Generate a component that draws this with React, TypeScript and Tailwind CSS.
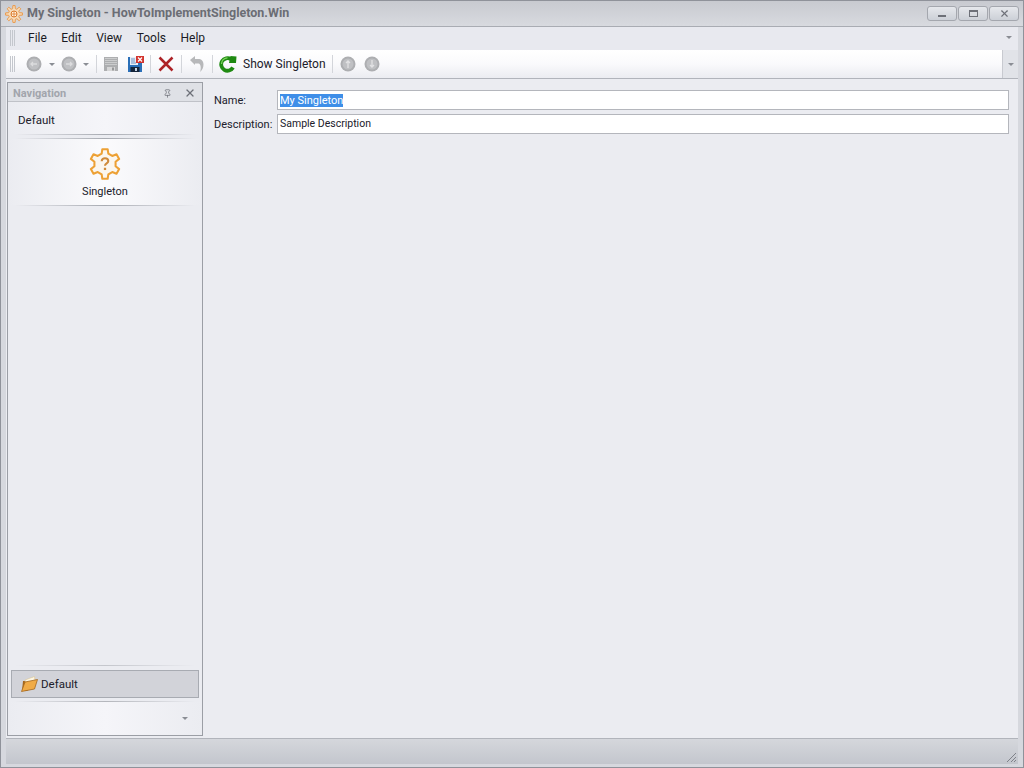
import type { ReactNode } from "react";
import { Pin, X } from "lucide-react";

function gearPath(cx: number, cy: number, outer: number, inner: number, teeth: number) {
  const step = (Math.PI * 2) / teeth;
  const pts: string[] = [];
  for (let i = 0; i < teeth; i++) {
    const a = -Math.PI / 2 + i * step;
    const at = (r: number, off: number) =>
      `${(cx + r * Math.cos(a + off * step)).toFixed(2)} ${(cy + r * Math.sin(a + off * step)).toFixed(2)}`;
    pts.push(at(inner, -0.3), at(outer, -0.17), at(outer, 0.17), at(inner, 0.3));
  }
  return `M${pts.join("L")}Z`;
}

function Grip() {
  return (
    <div className="flex gap-px h-[16px]">
      <div className="w-px bg-[#c4c7cd]" />
      <div className="w-px bg-[#c4c7cd]" />
      <div className="w-px bg-[#c4c7cd]" />
    </div>
  );
}

function Sep() {
  return <div className="w-px h-[18px] bg-[#d3d5da]" />;
}

function Caret({ className = "" }: { className?: string }) {
  return <div className={`w-0 h-0 border-x-[3px] border-x-transparent border-t-[3px] border-t-[#8a8d94] ${className}`} />;
}

function RoundIcon({ kind }: { kind: "back" | "forward" | "up" | "down" }) {
  return (
    <svg width="16" height="16" viewBox="0 0 16 16">
      <circle cx="8" cy="8" r="7.5" fill="#adaeb1" />
      <circle cx="8" cy="8" r="5.500" fill="#bfc0c3" />
      {kind === "back" && <path d="M11 8H5M7 6 5 8l2 2" stroke="#dcdcde" strokeWidth="1.300" fill="none" />}
      {kind === "forward" && <path d="M5 8h6M9 6l2 2-2 2" stroke="#dcdcde" strokeWidth="1.300" fill="none" />}
      {kind === "up" && <path d="M8 12V5M6 7l2-2 2 2" stroke="#e2e2e4" strokeWidth="1.300" fill="none" />}
      {kind === "down" && <path d="M8 4v7M6 9l2 2 2-2" stroke="#e2e2e4" strokeWidth="1.300" fill="none" />}
    </svg>
  );
}

function SaveIcon() {
  return (
    <svg width="16" height="16" viewBox="0 0 16 16">
      <rect x="1" y="1" width="14" height="14" fill="#adaeb0" />
      <path d="M2 2.500h12M2 4.500h12M2 6.500h12M2 8.500h12" stroke="#cbcccd" />
      <rect x="4" y="11" width="8" height="4" fill="#d6d6d7" />
      <rect x="9" y="11.500" width="2" height="3" fill="#97989a" />
    </svg>
  );
}

function SaveCloseIcon() {
  return (
    <svg width="16" height="16" viewBox="0 0 16 16">
      <rect x="0" y="1" width="14" height="15" fill="#2a6fb8" />
      <rect x="2" y="1" width="8" height="8" fill="#e9eef6" />
      <path d="M3 3h4M3 5h4M3 7h5" stroke="#6d93c4" />
      <rect x="2.500" y="11" width="9" height="5" fill="#14243a" />
      <rect x="7" y="12" width="2" height="3" fill="#c9d4e2" />
      <rect x="8" y="0" width="8" height="7" fill="#d2342e" />
      <path d="m10 1.500 4 4M14 1.500l-4 4" stroke="#fff" strokeWidth="1.200" />
    </svg>
  );
}

function DeleteIcon() {
  return (
    <svg width="16" height="16" viewBox="0 0 16 16">
      <path d="M1.500 1.500 14.500 14.500M14.500 1.500 1.500 14.500" stroke="#ad2327" strokeWidth="2.500" />
    </svg>
  );
}

function UndoIcon() {
  return (
    <svg width="14" height="16" viewBox="0 0 14 16">
      <path d="M0 4 5 0v3h3c3.500 0 5.500 2 5.500 5.500 0 3-1.200 5.500-3.500 7.500 .8-2 1-4.500 .4-6.500C9.800 7.800 9 7.500 7.500 7.500H5V9Z" fill="#b7b8ba" />
    </svg>
  );
}

function RefreshIcon() {
  return (
    <svg width="18" height="18" viewBox="0 0 18 18">
      <path d="M14 12.500A6.300 6.300 0 1 1 12 4.200" fill="none" stroke="#1f8a12" strokeWidth="3.800" />
      <path d="M11.500 1 17.500 1.500 17 8 10 8Z" fill="#1f8a12" />
      <path d="M2.500 9A6 6 0 0 1 8.500 2.800" fill="none" stroke="#7fd65f" strokeWidth="1.300" />
    </svg>
  );
}

function GearQuestion() {
  return (
    <svg width="32" height="32" viewBox="0 0 34 34">
      <path d={gearPath(17, 17, 16, 11.500, 6)} fill="#fbf6ee" stroke="#eda135" strokeWidth="2.200" strokeLinejoin="round" />
      <path d="M13.500 14c0-2 1.500-3.200 3.500-3.200s3.500 1.200 3.500 3c0 2.500-3.500 2.500-3.500 5" fill="none" stroke="#cf8a3a" strokeWidth="2.200" />
      <rect x="15.800" y="21" width="2.400" height="2.400" fill="#cf8a3a" />
    </svg>
  );
}

function AppIcon() {
  return (
    <svg width="18" height="18" viewBox="0 0 18 18">
      <path d={gearPath(9, 9, 8.500, 5.500, 8)} fill="#f7dcba" stroke="#ea9a4c" strokeWidth="1" />
      <circle cx="9" cy="9" r="3" fill="#fff6e8" stroke="#dd7b2a" />
      <path d="M9 6v6M6 9h6" stroke="#dd7b2a" strokeWidth=".8" />
    </svg>
  );
}

function FolderIcon() {
  return (
    <svg width="18" height="18" viewBox="0 0 18 18">
      <path d="M3 6h3l8-4 1 7-8 7H2Z" fill="#a5671d" />
      <path d="M5 5 14.500 1.500 15.500 9 6 11Z" fill="#fdf6e3" stroke="#d9c08a" strokeWidth=".5" />
      <path d="M5 7 17.500 4.500 14.500 14 1.500 16.500Z" fill="#f0ab47" stroke="#a5671d" strokeWidth=".8" />
    </svg>
  );
}

function WindowButton({ children }: { children: ReactNode }) {
  return (
    <div className="w-[30px] h-[15px] flex items-center justify-center rounded-[3px] border border-[#a4a7ae] bg-gradient-to-b from-[#e6e8ec] to-[#ccd0d7]">
      {children}
    </div>
  );
}

function MenuItem({ label }: { label: string }) {
  return <span className="text-[12px] text-[#1a1a24] leading-none">{label}</span>;
}

function FieldRow({ label, value, selected }: { label: string; value: string; selected?: boolean }) {
  return (
    <div className="flex items-center h-[20px]">
      <span className="w-[63px] shrink-0 text-[11px] text-[#20202a] leading-none">{label}</span>
      <div className="flex-1 h-[20px] flex items-center bg-white border border-[#b4b6bc] pl-[2px] text-[10.5px] leading-none text-[#20202a]">
        {selected ? (
          <span className="text-[11px] bg-[#3e8ee8] text-white leading-[13px]">{value}</span>
        ) : (
          <span className="mt-[1px]">{value}</span>
        )}
      </div>
    </div>
  );
}

function Fade({ className }: { className: string }) {
  return <div className={`mx-[7px] h-px shrink-0 bg-gradient-to-r from-transparent to-transparent ${className}`} />;
}

export default function App() {
  return (
    <div className="font-['Roboto',sans-serif] w-[1024px] h-[768px] overflow-hidden flex flex-col bg-[#d6d8de] border border-[#8f929a]">
      <div className="h-[26px] shrink-0 flex items-center pl-[4px] pr-[4px] bg-gradient-to-b from-[#c8cad0] to-[#d8dadf] border-b border-[#a9acb3]">
        <AppIcon />
        <span className="ml-[4px] text-[12.5px] font-bold text-[#6b6d74] leading-none">My Singleton - HowToImplementSingleton.Win</span>
        <div className="ml-auto flex gap-[1px] -mt-[1px]">
          <WindowButton><div className="w-[8px] h-[2px] bg-[#6d7078] mt-[5px]" /></WindowButton>
          <WindowButton><div className="w-[9px] h-[7px] border border-t-2 border-[#6d7078]" /></WindowButton>
          <WindowButton><X size={11} strokeWidth={2.500} className="text-[#6d7078]" /></WindowButton>
        </div>
      </div>

      <div className="flex-1 min-h-0 flex flex-col pl-[5px] pr-[5px]">
        <div className="h-[23px] shrink-0 flex items-center bg-[#e8e9ef] pl-[4px] pr-[6px] pb-[2px]">
          <Grip />
          <div className="ml-[13px] flex gap-[14.5px]">
            <MenuItem label="File" />
            <MenuItem label="Edit" />
            <MenuItem label="View" />
            <MenuItem label="Tools" />
            <MenuItem label="Help" />
          </div>
          <Caret className="ml-auto" />
        </div>

        <div className="h-[29px] shrink-0 flex items-center bg-gradient-to-b from-white via-[#fafafc] to-[#ebecf1] border-b border-[#b1b4bb] pl-[4px]">
          <Grip />
          <div className="ml-[11px] flex items-center">
            <RoundIcon kind="back" />
            <Caret className="ml-[7px]" />
            <div className="ml-[6px]"><RoundIcon kind="forward" /></div>
            <Caret className="ml-[6px]" />
            <div className="ml-[7px]"><Sep /></div>
            <div className="ml-[6px]"><SaveIcon /></div>
            <div className="ml-[9px]"><SaveCloseIcon /></div>
            <div className="ml-[6px]"><Sep /></div>
            <div className="ml-[7px]"><DeleteIcon /></div>
            <div className="ml-[7px]"><Sep /></div>
            <div className="ml-[8px]"><UndoIcon /></div>
            <div className="ml-[8px]"><Sep /></div>
            <div className="ml-[6px]"><RefreshIcon /></div>
            <span className="ml-[6px] text-[12px] text-[#20202a] leading-none">Show Singleton</span>
            <div className="ml-[6px]"><Sep /></div>
            <div className="ml-[7px]"><RoundIcon kind="up" /></div>
            <div className="ml-[8px]"><RoundIcon kind="down" /></div>
          </div>
          <div className="ml-auto w-[16px] h-full flex items-center justify-center bg-[#e1e3e8] border-l border-[#c8cad0]">
            <Caret />
          </div>
        </div>

        <div className="flex-1 min-h-0 flex bg-[#ebecf1]">
          <div className="w-[196px] shrink-0 flex flex-col mt-[3px] mb-[2px] ml-[1px] bg-[#ebecf1] border border-[#9b9ea5]">
            <div className="h-[19px] shrink-0 flex items-center pl-[5px] pr-[6px] pt-[2px] bg-[#dfe1e6] border-b border-[#c0c2c8]">
              <span className="text-[11px] font-bold text-[#a2a5ac] leading-none">Navigation</span>
              <Pin size={9} strokeWidth={2} className="ml-auto text-[#6d7078]" />
              <X size={12} strokeWidth={2.500} className="ml-[12px] text-[#6d7078]" />
            </div>
            <div className="h-[32px] shrink-0 flex items-center pl-[10px] pt-[6px] bg-gradient-to-r from-[#ebecf1] via-[#f5f5f9] to-[#ebecf1] text-[11.5px] text-[#20202a] leading-none">
              Default
            </div>
            <Fade className="via-[#a8abb2]" />
            <div className="h-[3px] shrink-0" />
            <Fade className="via-[#a8abb2]" />
            <div className="h-[66px] shrink-0 flex flex-col items-center pt-[9px] bg-gradient-to-r from-[#ebecf1] via-[#fbfbfd] to-[#ebecf1]">
              <GearQuestion />
              <span className="mt-[6px] text-[11px] text-[#20202a] leading-none">Singleton</span>
            </div>
            <Fade className="via-[#a8abb2]" />
            <div className="flex-1 min-h-0" />
            <Fade className="via-[#c4c6cc]" />
            <div className="h-[4px] shrink-0" />
            <div className="mx-[3px] h-[28px] shrink-0 flex items-center pl-[8px] bg-[#d2d3d9] border border-[#a8abb2]">
              <FolderIcon />
              <span className="ml-[3px] mt-[1px] text-[11.5px] text-[#20202a] leading-none">Default</span>
            </div>
            <div className="h-[3px] shrink-0" />
            <Fade className="via-[#b4b6bc]" />
            <div className="h-[33px] shrink-0 flex items-center justify-end pr-[14px] bg-gradient-to-r from-[#ebecf1] via-[#f5f5f9] to-[#ebecf1]">
              <Caret />
            </div>
          </div>

          <div className="flex-1 min-w-0 flex flex-col gap-[4px] pt-[11px] pl-[11px] pr-[9px]">
            <FieldRow label="Name:" value="My Singleton" selected />
            <FieldRow label="Description:" value="Sample Description" />
          </div>
        </div>

        <div className="h-[26px] shrink-0 flex items-end justify-end bg-gradient-to-b from-[#d5d7dc] to-[#c3c6cd] border-t border-[#b1b4bb] pr-[1px] pb-[1px]">
          <svg width="12" height="12" viewBox="0 0 12 12">
            <path d="M11 2 2 11M11 6l-5 5M11 9l-2 2" stroke="#7f8289" strokeWidth="1" />
          </svg>
        </div>
      </div>

      <div className="h-[3px] shrink-0 bg-[#d6d8de]" />
    </div>
  );
}
